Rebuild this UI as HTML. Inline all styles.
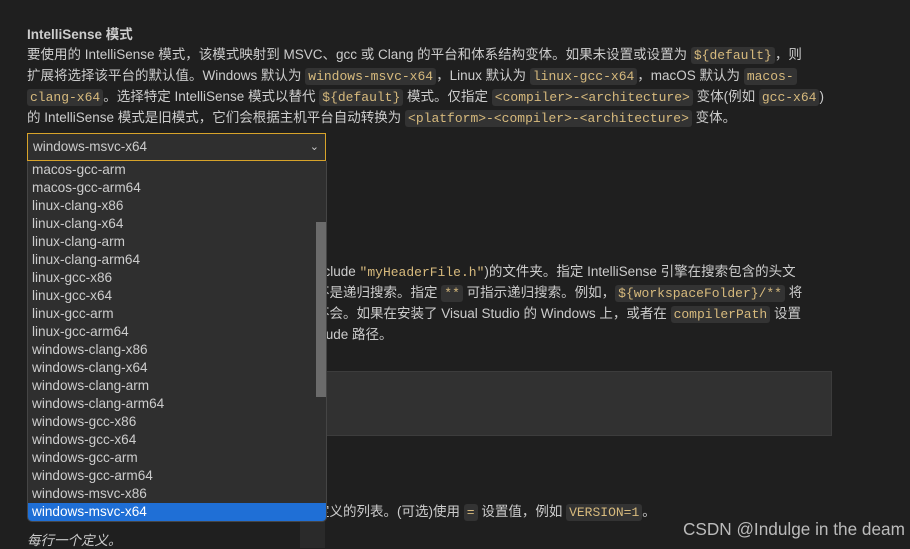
<!DOCTYPE html>
<html><head><meta charset="utf-8"><style>
body{margin:0;width:910px;height:547px;background:#1f1f1f;overflow:hidden;position:relative;font-family:"Liberation Sans","Noto Sans CJK SC",sans-serif;font-size:13.5px;color:#cccccc}
.a{position:absolute;white-space:nowrap}
code{font-family:"Liberation Mono","Noto Sans CJK SC",monospace;font-size:13px;color:#d7ba7d;background:#333;border-radius:3px;padding:1px 3px}
.dd{position:absolute;left:27px;top:161px;width:298px;height:360px;background:#2f2f2f;border:1px solid #454545;border-top:none;border-radius:0 0 5px 5px;overflow:hidden;font-size:13.6px}
.dd div{height:18px;line-height:18px;padding-left:4px;color:#cccccc}
.dd .s{background:#1f6fd6;color:#fff}
</style></head><body>
<div class="a" style="left:27px;top:23px;font-weight:bold">IntelliSense 模式</div>
<div class="a" style="left:27px;top:45px;line-height:20px">要使用的 IntelliSense 模式，该模式映射到 MSVC、gcc 或 Clang 的平台和体系结构变体。如果未设置或设置为 <code>${default}</code>，则<br>扩展将选择该平台的默认值。Windows 默认为 <code>windows-msvc-x64</code>，Linux 默认为 <code>linux-gcc-x64</code>，macOS 默认为 <code>macos-</code><br><code>clang-x64</code>。选择特定 IntelliSense 模式以替代 <code>${default}</code> 模式。仅指定 <code>&lt;compiler&gt;-&lt;architecture&gt;</code> 变体(例如 <code>gcc-x64</code>)<br>的 IntelliSense 模式是旧模式，它们会根据主机平台自动转换为 <code>&lt;platform&gt;-&lt;compiler&gt;-&lt;architecture&gt;</code> 变体。</div>
<div class="a" style="left:27px;top:133px;background:#2f2f2f;border:1px solid #d7a32a;line-height:26px;padding-left:5px;box-sizing:border-box;width:299px;height:28px">windows-msvc-x64<span style="position:absolute;right:6px;top:0;font-size:11px">&#8964;</span></div>
<div class="a" style="left:300px;top:258px;width:25px;height:290px;background:#2a2a2a"></div>
<div class="a" style="left:316px;top:262px;line-height:20px">nclude <code style="background:none;padding:0">"myHeaderFile.h"</code>)的文件夹。指定 IntelliSense 引擎在搜索包含的头文<br>不是递归搜索。指定 <code>**</code> 可指示递归搜索。例如，<code>${workspaceFolder}/**</code> 将<br>不会。如果在安装了 Visual Studio 的 Windows 上，或者在 <code>compilerPath</code> 设置<br>clude 路径。</div>
<div class="a" style="left:326px;top:371px;width:506px;height:65px;background:#313131;border:1px solid #3c3c3c;box-sizing:border-box"></div>
<div class="a" style="left:316px;top:500px">定义的列表。(可选)使用 <code>=</code> 设置值，例如 <code>VERSION=1</code>。</div>
<div class="a" style="left:27px;top:529px;font-style:italic">每行一个定义。</div>
<div class="a" style="left:683px;top:519px;font-size:17.2px;color:#bbb">CSDN @Indulge in the deam</div>
<div class="dd">
<div>macos-gcc-arm</div><div>macos-gcc-arm64</div><div>linux-clang-x86</div><div>linux-clang-x64</div><div>linux-clang-arm</div><div>linux-clang-arm64</div><div>linux-gcc-x86</div><div>linux-gcc-x64</div><div>linux-gcc-arm</div><div>linux-gcc-arm64</div><div>windows-clang-x86</div><div>windows-clang-x64</div><div>windows-clang-arm</div><div>windows-clang-arm64</div><div>windows-gcc-x86</div><div>windows-gcc-x64</div><div>windows-gcc-arm</div><div>windows-gcc-arm64</div><div>windows-msvc-x86</div><div class="s">windows-msvc-x64</div>
</div>
<div class="a" style="left:316px;top:222px;width:10px;height:175px;background:#6b6b6b"></div>
</body></html>
